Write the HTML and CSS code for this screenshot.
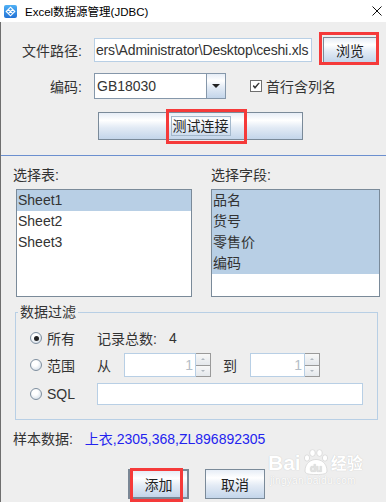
FILE: index.html
```html
<!DOCTYPE html>
<html lang="zh">
<head>
    <meta charset="UTF-8">
    <meta name="viewport" content="width=device-width, initial-scale=1.0">
    <title>Excel数据源管理(JDBC)</title>
    <link rel="stylesheet" href="styles.css">
</head>
<body>
    <div class="titlebar">
        <svg class="app-icon" viewBox="0 0 13 13">
            <defs>
                <linearGradient id="ig" x1="0" y1="0" x2="0" y2="1">
                    <stop offset="0" stop-color="#4fb0f5"/>
                    <stop offset="1" stop-color="#2373d6"/>
                </linearGradient>
            </defs>
            <rect x="0" y="0" width="13" height="13" rx="2" fill="url(#ig)"/>
            <path d="M6.5 2.2 L10.8 6.5 L6.5 10.8 L2.2 6.5 Z M4.35 4.35 L8.65 8.65 M8.65 4.35 L4.35 8.65" fill="none" stroke="#fff" stroke-width="1.1"/>
        </svg>
        <span class="title">Excel数据源管理(JDBC)</span>
        <svg class="close" viewBox="0 0 10 10">
            <path d="M0.5 0.5 L9.5 9.5 M9.5 0.5 L0.5 9.5" stroke="#111" stroke-width="1"/>
        </svg>
    </div>

    <div class="dialog">
        <div class="top">
            <div class="row">
                <label class="row-label">文件路径:</label>
                <div class="field path"><span>ers\Administrator\Desktop\ceshi.xls</span></div>
                <div class="marked browse-wrap">
                    <button class="btn browse">浏览</button>
                    <span class="mark mark-browse"></span>
                </div>
            </div>

            <div class="row">
                <label class="row-label">编码:</label>
                <div class="combo">
                    <span class="combo-value">GB18030</span>
                    <span class="combo-arrow"></span>
                </div>
                <label class="check">
                    <svg class="checkbox" viewBox="0 0 12 12">
                        <rect x="0.5" y="0.5" width="11" height="11" fill="#fff" stroke="#6f6f6f"/>
                        <path d="M3 6 L5 8.5 L9.3 3.2 L8.3 3.2 L5 7 L4 5.6 Z" fill="#222" stroke="#222" stroke-width="0.6"/>
                    </svg>
                    首行含列名
                </label>
            </div>

            <div class="row row-test">
                <div class="marked">
                    <button class="btn test"><span class="focus">测试连接</span></button>
                    <span class="mark mark-test"></span>
                </div>
            </div>
        </div>

        <div class="separator"></div>

        <div class="lists">
            <div class="list-col left">
                <div class="list-title">选择表:</div>
                <ul class="list">
                    <li class="sel">Sheet1</li>
                    <li>Sheet2</li>
                    <li>Sheet3</li>
                </ul>
            </div>
            <div class="list-col right">
                <div class="list-title">选择字段:</div>
                <ul class="list">
                    <li class="sel">品名</li>
                    <li class="sel">货号</li>
                    <li class="sel">零售价</li>
                    <li class="sel">编码</li>
                </ul>
            </div>
        </div>

        <fieldset class="filter">
            <legend>数据过滤</legend>
            <div class="filter-body">
                <div class="frow">
                    <label class="radio-label"><span class="radio on"></span>所有</label>
                    <span>记录总数:</span>
                    <span class="count">4</span>
                </div>
                <div class="frow frow-range">
                    <label class="radio-label"><span class="radio"></span>范围</label>
                    <span class="from">从</span>
                    <div class="spinner wide">
                        <span class="spin-value">1</span>
                        <span class="spin-btns"><span class="spin-up"></span><span class="spin-down"></span></span>
                    </div>
                    <span class="to">到</span>
                    <div class="spinner narrow">
                        <span class="spin-value">1</span>
                        <span class="spin-btns"><span class="spin-up"></span><span class="spin-down"></span></span>
                    </div>
                </div>
                <div class="frow frow-sql">
                    <label class="radio-label"><span class="radio"></span>SQL</label>
                    <div class="field sql"></div>
                </div>
            </div>
        </fieldset>

        <div class="sample">
            <span class="sample-label">样本数据:</span>
            <span class="sample-value">上衣,2305,368,ZL896892305</span>
        </div>

        <div class="actions">
            <div class="marked">
                <button class="btn add">添加</button>
                <span class="mark mark-add"></span>
            </div>
            <button class="btn cancel">取消</button>
        </div>
    </div>

    <div class="watermark">
        <div class="wm-top">
            <span class="wm-bai">Bai</span>
            <svg class="wm-paw" viewBox="0 0 28 26">
                <ellipse cx="5" cy="9" rx="2.6" ry="3.2" fill="#fff" stroke="#d6d6d6" stroke-width="0.8"/>
                <ellipse cx="10.5" cy="4" rx="2.8" ry="3.4" fill="#fff" stroke="#d6d6d6" stroke-width="0.8"/>
                <ellipse cx="17.5" cy="4" rx="2.8" ry="3.4" fill="#fff" stroke="#d6d6d6" stroke-width="0.8"/>
                <ellipse cx="23" cy="9" rx="2.6" ry="3.2" fill="#fff" stroke="#d6d6d6" stroke-width="0.8"/>
                <path d="M3 22 C3 14 9 10.5 14 10.5 C19 10.5 25 14 25 22 C25 25 21 25.5 14 25.5 C7 25.5 3 25 3 22 Z" fill="#fff" stroke="#d6d6d6" stroke-width="0.8"/>
                <text x="14" y="22.5" text-anchor="middle" font-family="Liberation Sans, sans-serif" font-weight="bold" font-size="10" fill="#e2e2e2">du</text>
            </svg>
            <span class="wm-jy">经验</span>
        </div>
        <div class="wm-url">jingyan.baidu.com</div>
    </div>
</body>
</html>
```

FILE: styles.css
```css
* {
    box-sizing: border-box;
}
body {
    margin: 0;
    width: 386px;
    height: 502px;
    overflow: hidden;
    position: relative;
    background: #eeeeee;
    font-family: "Liberation Sans", "Noto Sans CJK SC", sans-serif;
    font-size: 14px;
    color: #333;
}

/* 标题栏 */
.titlebar {
    height: 22px;
    background: #fff;
    display: flex;
    align-items: center;
    padding-left: 4px;
    font-size: 11.5px;
    color: #000;
}
.app-icon {
    width: 13px;
    height: 13px;
    margin-right: 8px;
}
.close {
    width: 10px;
    height: 10px;
    margin-left: auto;
    margin-right: 4px;
}

.dialog {
    height: 480px;
    border-left: 1px solid #6e6e6e;
}

/* 上半部分 */
.top {
    padding-top: 15px;
}
.row {
    display: flex;
    align-items: center;
    height: 26px;
}
.row + .row {
    margin-top: 10px;
}
.row-label {
    width: 81px;
    margin-right: 12px;
    text-align: right;
}
.field {
    background: #fff;
    border: 1px solid #b8cfe5;
}
.field.path {
    width: 218px;
    height: 24px;
    display: flex;
    align-items: center;
    overflow: hidden;
    white-space: nowrap;
    padding-left: 1px;
    letter-spacing: -0.18px;
}
.marked {
    position: relative;
}
.browse-wrap {
    margin-left: 11px;
}
.btn {
    font-family: inherit;
    font-size: 14px;
    color: #222;
    padding: 0;
    border: 1px solid #7a8a99;
    background: linear-gradient(#e6edf6, #ffffff 28%, #e3ebf5 55%, #c3d5ea);
    display: flex;
    align-items: center;
    justify-content: center;
}
.browse {
    width: 54px;
    height: 26px;
}
.combo {
    width: 132px;
    height: 26px;
    display: flex;
    border: 1px solid #8597aa;
    background: #fff;
}
.combo-value {
    flex: 1;
    padding-left: 2px;
    line-height: 24px;
}
.combo-arrow {
    width: 19px;
    border-left: 1px solid #8597aa;
    background: linear-gradient(#e6edf6, #ffffff 28%, #e3ebf5 55%, #c3d5ea);
    position: relative;
}
.combo-arrow::after {
    content: "";
    position: absolute;
    left: 5px;
    top: 10px;
    border-left: 4px solid transparent;
    border-right: 4px solid transparent;
    border-top: 4px solid #222;
}
.check {
    display: flex;
    align-items: center;
    margin-left: 24px;
}
.checkbox {
    width: 12px;
    height: 12px;
    margin-right: 4px;
}
.row.row-test {
    margin-top: 13px;
    height: 28px;
    padding-left: 97px;
}
.test {
    width: 205px;
    height: 28px;
}
.focus {
    border: 1px solid #a3b8cc;
    padding: 0 1px;
    line-height: 18px;
}

/* 红色标注框 */
.mark {
    position: absolute;
    border: 3px solid #f53a3a;
    pointer-events: none;
}
.mark-browse {
    left: -4px;
    top: -5px;
    width: 60px;
    height: 33px;
}
.mark-test {
    left: 68px;
    top: -3px;
    width: 81px;
    height: 35px;
}
.mark-add {
    left: 2px;
    top: -1px;
    width: 53px;
    height: 34px;
}

.separator {
    margin-top: 15px;
    height: 1px;
    background: #6b8fcf;
}

/* 列表 */
.lists {
    display: flex;
    margin-top: 11px;
}
.list-title {
    line-height: 16px;
    margin-bottom: 6px;
}
.list-col.left {
    margin-left: 12px;
    width: 179px;
}
.list-col.left .list {
    margin-left: 3px;
    width: 176px;
}
.list-col.right {
    margin-left: 19px;
}
.list-col.right .list {
    width: 169px;
}
.list {
    list-style: none;
    margin: 0;
    padding: 0;
    height: 108px;
    background: #fff;
    border: 1px solid #7a8a99;
}
.list li {
    height: 21px;
    line-height: 21px;
    padding-left: 1px;
}
.list li.sel {
    background: #b8cfe5;
}

/* 数据过滤 */
.filter {
    margin: 7px 0 0 14px;
    width: 363px;
    padding: 0;
    border: 1px solid #b8cfe5;
    min-width: 0;
}
.filter legend {
    margin-left: 2px;
    padding: 0 2px;
    line-height: 16px;
}
.filter-body {
    padding: 6px 0 13px 14px;
}
.frow {
    display: flex;
    align-items: center;
    height: 24px;
}
.frow-range {
    margin-top: 3px;
}
.frow-sql {
    margin-top: 5px;
}
.radio-label {
    width: 67px;
    display: flex;
    align-items: center;
}
.radio {
    width: 12px;
    height: 12px;
    margin-right: 5px;
    border-radius: 50%;
    border: 1px solid #7f8f9f;
    background: radial-gradient(circle at 40% 35%, #ffffff 30%, #c6d3e0);
    position: relative;
}
.radio.on::after {
    content: "";
    position: absolute;
    left: 2.5px;
    top: 2.5px;
    width: 5px;
    height: 5px;
    border-radius: 50%;
    background: #222;
}
.count {
    margin-left: 12px;
}
.from {
    margin-right: 13px;
}
.to {
    margin: 0 13px 0 12px;
}
.spinner {
    display: flex;
    height: 24px;
}
.spinner.wide {
    width: 87px;
}
.spinner.narrow {
    width: 70px;
}
.spin-value {
    flex: 1;
    background: #fff;
    border: 1px solid #b8cfe5;
    text-align: right;
    padding-right: 2px;
    line-height: 22px;
    color: #b4bec8;
}
.spin-btns {
    width: 15px;
    display: flex;
    flex-direction: column;
    border: 1px solid #9a9a9a;
    border-left: none;
}
.spin-up,
.spin-down {
    flex: 1;
    position: relative;
    background: linear-gradient(#f8f8f8, #e4e8ec);
}
.spin-up {
    border-bottom: 1px solid #9a9a9a;
}
.spin-up::after,
.spin-down::after {
    content: "";
    position: absolute;
    left: 5px;
    top: 4px;
    border-left: 2px solid transparent;
    border-right: 2px solid transparent;
}
.spin-up::after {
    border-bottom: 2px solid #b0b8c0;
}
.spin-down::after {
    border-top: 2px solid #b0b8c0;
}
.field.sql {
    width: 266px;
    height: 22px;
}

/* 样本数据 */
.sample {
    margin-top: 9px;
    padding-left: 12px;
    line-height: 20px;
}
.sample-value {
    margin-left: 8px;
    color: #2323ee;
}

.actions {
    display: flex;
    margin-top: 20px;
    padding-left: 127px;
}
.add {
    width: 61px;
    height: 30px;
    border: 2px solid #7a8795;
}
.cancel {
    width: 60px;
    height: 30px;
    margin-left: 16px;
}

/* 水印 */
.watermark {
    position: absolute;
    left: 268px;
    top: 449px;
    color: #fff;
    text-shadow: 0 0 1px #bcbcbc;
}
.wm-top {
    display: flex;
    align-items: flex-end;
}
.wm-bai {
    font-size: 21px;
    font-weight: bold;
    line-height: 24px;
}
.wm-paw {
    width: 28px;
    height: 26px;
    margin: 0 1px;
}
.wm-jy {
    font-size: 16px;
    line-height: 22px;
    font-weight: bold;
}
.wm-url {
    font-size: 10px;
    line-height: 12px;
    margin-left: 2px;
    letter-spacing: 0.3px;
}
```
